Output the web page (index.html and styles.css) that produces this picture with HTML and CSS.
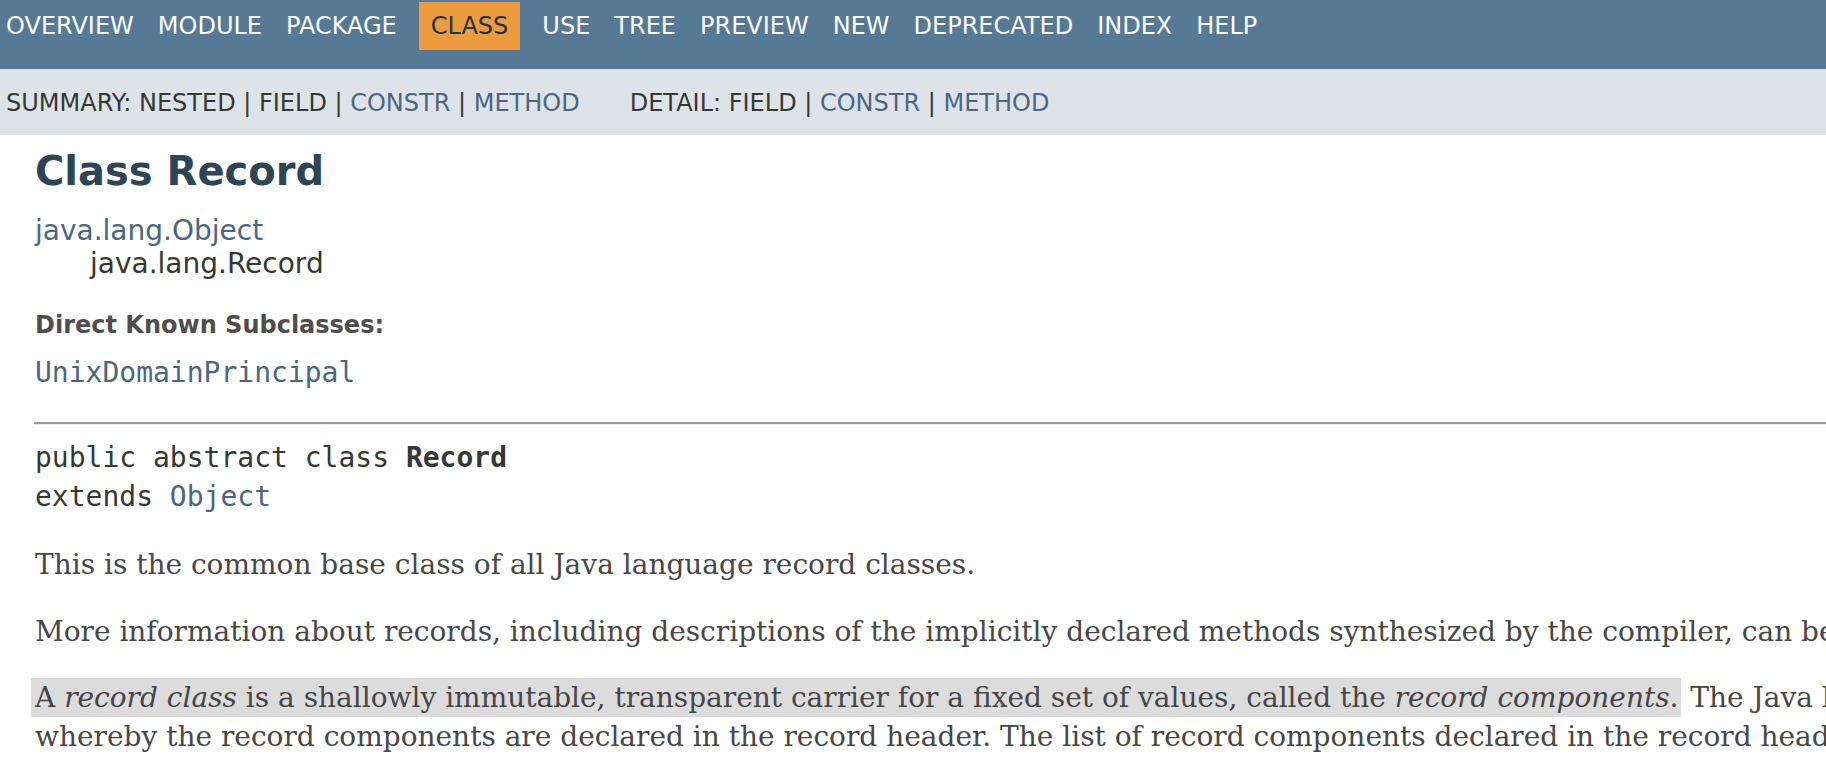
FILE: index.html
```html
<!DOCTYPE html>
<html lang="en">
<head>
<meta charset="utf-8">
<title>Record (Java SE)</title>
<link rel="stylesheet" href="styles.css">
</head>
<body>
<div class="page">
  <header class="flex-header">
    <nav class="top-nav">
      <ul class="nav-list">
        <li><a href="#">Overview</a></li>
        <li><a href="#">Module</a></li>
        <li><a href="#">Package</a></li>
        <li class="nav-bar-cell1-rev">Class</li>
        <li><a href="#">Use</a></li>
        <li><a href="#">Tree</a></li>
        <li><a href="#">Preview</a></li>
        <li><a href="#">New</a></li>
        <li><a href="#">Deprecated</a></li>
        <li><a href="#">Index</a></li>
        <li><a href="#">Help</a></li>
      </ul>
    </nav>
    <div class="sub-nav">
      <ul class="sub-nav-list">
        <li>Summary:&nbsp;</li>
        <li>Nested&nbsp;|&nbsp;</li>
        <li>Field&nbsp;|&nbsp;</li>
        <li><a href="#">Constr</a>&nbsp;|&nbsp;</li>
        <li><a href="#">Method</a></li>
      </ul>
      <ul class="sub-nav-list">
        <li>Detail:&nbsp;</li>
        <li>Field&nbsp;|&nbsp;</li>
        <li><a href="#">Constr</a>&nbsp;|&nbsp;</li>
        <li><a href="#">Method</a></li>
      </ul>
    </div>
  </header>
  <main class="content">
    <h1 class="title">Class Record</h1>
    <div class="inheritance">
      <a href="#" class="link">java.lang.Object</a>
      <div class="inheritance nested">java.lang.Record</div>
    </div>
    <dl class="notes">
      <dt>Direct Known Subclasses:</dt>
      <dd><code><a href="#" class="link">UnixDomainPrincipal</a></code></dd>
    </dl>
    <hr class="rule">
    <div class="type-signature">
      <span class="modifiers">public abstract class </span><span class="element-name">Record</span><br>
      <span class="extends">extends <a href="#" class="link">Object</a></span>
    </div>
    <div class="block">
      <p>This is the common base class of all Java language record classes.</p>
      <p>More information about records, including descriptions of the implicitly declared methods synthesized by the compiler, can be found in the <cite>Java Language Specification</cite> section 8.10.</p>
      <p><span class="highlight">A <i>record class</i> is a shallowly immutable, transparent carrier for a fixed set of values, called the <i>record components</i>.</span> The Java language provides concise syntax for declaring record classes,<br>whereby the record components are declared in the record header. The list of record components declared in the record header form the <i>record descriptor</i>.</p>
    </div>
  </main>
</div>
</body>
</html>
```
FILE: styles.css
```css
html, body {
  margin: 0;
  padding: 0;
  overflow: hidden;
  background: #ffffff;
}

body {
  font-family: "DejaVu Sans", "Liberation Sans", sans-serif;
  color: #353833;
}

.page {
  width: 1826px;
  height: 778px;
  overflow: hidden;
}

a {
  text-decoration: none;
}

.link,
.sub-nav-list a {
  color: #4a6782;
}

/* ---------- top navigation ---------- */
.top-nav {
  height: 69px;
  background-color: #567996;
  box-sizing: border-box;
  padding-top: 2px;
}

.nav-list {
  display: flex;
  margin: 0 0 0 -6px;
  padding: 0;
  list-style: none;
}

.nav-list li {
  padding: 10px 12px;
  font-size: 24px;
  line-height: normal;
  text-transform: uppercase;
  white-space: nowrap;
}

.nav-list li a {
  color: #ffffff;
}

.nav-list .nav-bar-cell1-rev {
  margin: 0 10px;
  background-color: #ed9b3f;
  color: #253441;
}

/* ---------- sub navigation ---------- */
.sub-nav {
  display: flex;
  height: 66px;
  box-sizing: border-box;
  padding: 20px 0 0 6px;
  background-color: #dee3e9;
}

.sub-nav-list {
  display: flex;
  margin: 0 50px 0 0;
  padding: 0;
  list-style: none;
  font-size: 24px;
  line-height: normal;
  text-transform: uppercase;
  white-space: nowrap;
}

/* ---------- content ---------- */
.content {
  padding: 13px 0 0 35px;
}

.title {
  margin: 0 0 20px 0;
  font-size: 40px;
  line-height: normal;
  font-weight: bold;
  color: #2c4557;
}

.inheritance {
  font-size: 28px;
  line-height: normal;
  white-space: nowrap;
}

.inheritance .link {
  display: block;
}

.inheritance.nested {
  margin-left: 55px;
  color: #353833;
}

.notes {
  margin: 31px 0 0 0;
}

.notes dt {
  font-size: 24px;
  line-height: normal;
  font-weight: bold;
  color: #4e4e4e;
}

.notes dd {
  margin: 17px 0 0 0;
}

code,
.type-signature {
  font-family: "DejaVu Sans Mono", "Liberation Mono", monospace;
  font-size: 28px;
  line-height: normal;
}

.rule {
  margin: 33px 0 0 -1px;
  height: 0;
  border: 0;
  border-top: 2px solid #9b9b9b;
  border-bottom: 1px solid #ececec;
}

.type-signature {
  margin-top: 13px;
  line-height: 1.4;
  white-space: nowrap;
}

.element-name {
  font-weight: bold;
}

.block {
  margin-top: 29px;
  font-family: "DejaVu Serif", "Liberation Serif", serif;
  font-size: 28px;
  line-height: 1.4;
  color: #474747;
  white-space: nowrap;
}

.block p {
  margin: 0 0 27px 0;
}

.highlight {
  margin-left: -4px;
  padding: 3px 3px 3px 4px;
  background-color: #dcdcdc;
}
```
